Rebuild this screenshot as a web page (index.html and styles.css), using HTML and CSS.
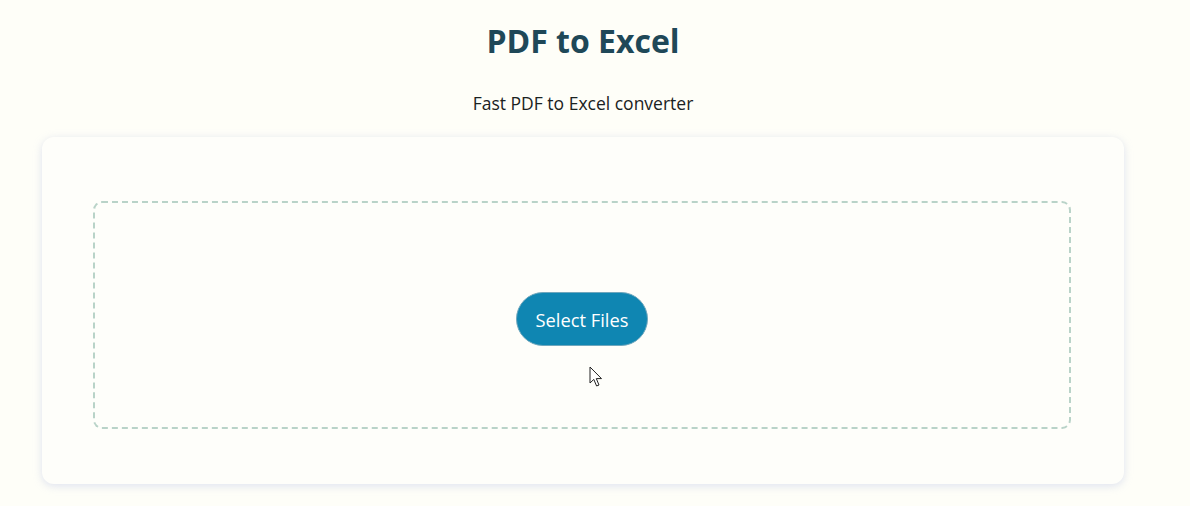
FILE: index.html
```html
<!DOCTYPE html>
<html lang="en">
<head>
<meta charset="utf-8">
<title>PDF to Excel</title>
<link rel="stylesheet" href="styles.css">
</head>
<body>
<div class="page">
  <h1 class="title">PDF to Excel</h1>
  <p class="subtitle">Fast PDF to Excel converter</p>
  <div class="card">
    <div class="dropzone">
      <button class="select-btn" type="button">Select Files</button>
      <svg class="cursor" width="14" height="22" viewBox="0 0 14 22">
        <path d="M1 1 L1 17 L4.8 13.4 L7.6 20 L10 19 L7.3 12.6 L12.5 12.6 Z" fill="#ffffff" stroke="#222" stroke-width="1" stroke-linejoin="round"/>
      </svg>
    </div>
  </div>
</div>
</body>
</html>
```
FILE: styles.css
```css
html, body {
  margin: 0;
  padding: 0;
  background: #fefef8;
}
body {
  font-family: "Open Sans", "Noto Sans", "Liberation Sans", sans-serif;
  width: 1190px;
  height: 506px;
  overflow: hidden;
}
.page {
  width: 1166px;
  display: flex;
  flex-direction: column;
  align-items: center;
}
.title {
  margin: 20px 0 0;
  font-size: 32px;
  line-height: 42px;
  font-weight: 700;
  color: #1f4858;
  letter-spacing: 0;
}
.subtitle {
  margin: 29px 0 0;
  font-size: 17.5px;
  line-height: 24px;
  color: #1a2222;
}
.card {
  box-sizing: border-box;
  margin-top: 22px;
  width: 1082px;
  height: 347px;
  padding: 64px 53px 55px 51px;
  background: #fefefa;
  border-radius: 12px;
  box-shadow: 0 2px 9px rgba(175, 185, 225, 0.4);
}
.dropzone {
  position: relative;
  box-sizing: border-box;
  height: 228px;
  border: 2px dashed #b9d3c8;
  border-radius: 9px;
  display: flex;
  align-items: center;
  justify-content: center;
}
.select-btn {
  margin-top: 8px;
  width: 132px;
  height: 54px;
  border-radius: 27px;
  border: 1px solid #6fa7bd;
  background: #0f86b2;
  color: #ffffff;
  font-family: "Open Sans", "Noto Sans", "Liberation Sans", sans-serif;
  font-size: 18.3px;
  padding: 0;
  cursor: pointer;
}
.cursor {
  position: absolute;
  left: 494px;
  top: 163px;
}
```
